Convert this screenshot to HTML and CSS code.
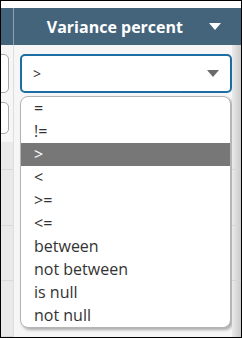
FILE: index.html
```html
<!DOCTYPE html>
<html lang="en">
<head>
    <meta charset="UTF-8">
    <title>Variance filter</title>
    <link rel="stylesheet" href="styles.css">
</head>
<body>
    <div class="frame">
        <div class="top-gap"></div>
        <div class="header">
            <div class="header-stub"></div>
            <div class="header-cell">
                <span class="header-title">Variance percent</span>
                <span class="caret caret-white"></span>
            </div>
        </div>
        <div class="grid-body">
            <div class="side">
                <div class="stub-input"></div>
                <div class="stub-input stub-second"></div>
                <div class="rows"></div>
            </div>
            <div class="filter-col">
                <div class="select">
                    <span class="select-value">&gt;</span>
                    <span class="caret caret-gray"></span>
                </div>
                <ul class="options">
                    <li>=</li>
                    <li>!=</li>
                    <li class="active">&gt;</li>
                    <li>&lt;</li>
                    <li>&gt;=</li>
                    <li>&lt;=</li>
                    <li>between</li>
                    <li>not between</li>
                    <li>is null</li>
                    <li>not null</li>
                </ul>
            </div>
            <div class="gutter"></div>
        </div>
    </div>
</body>
</html>
```

FILE: styles.css
```css
body {
    margin: 0;
    font-family: "Open Sans", Arial, sans-serif;
}
.frame {
    width: 242px;
    height: 338px;
    border: 1px solid #000;
    box-sizing: border-box;
    display: flex;
    flex-direction: column;
    background-color: #f6f6f6;
    overflow: hidden;
}
.top-gap {
    height: 7px;
    background-color: #fff;
}
.header {
    display: flex;
    height: 37px;
    background-color: #44647c;
}
.header-stub {
    width: 12px;
    border-right: 1px solid #8ea2b2;
}
.header-cell {
    flex: 1;
    display: flex;
    align-items: center;
    justify-content: flex-end;
    padding-right: 20px;
}
.header-title {
    color: #fff;
    font-weight: bold;
    font-size: 16px;
    margin-right: 26px;
}
.caret {
    width: 0;
    height: 0;
    border-left: 6.5px solid transparent;
    border-right: 6.5px solid transparent;
}
.caret-white {
    border-top: 7px solid #fff;
}
.caret-gray {
    border-top: 7px solid #6a6a6a;
}
.grid-body {
    flex: 1;
    display: flex;
}
.side {
    width: 12px;
    border-right: 1px solid #dedede;
    display: flex;
    flex-direction: column;
    overflow: hidden;
}
.stub-input {
    width: 16px;
    height: 37px;
    margin: 9px 0 0 -10px;
    border: 1px solid #a8a8a8;
    border-radius: 5px;
    background-color: #fff;
    flex-shrink: 0;
}
.stub-second {
    height: 30px;
    margin-top: 9px;
}
.rows {
    flex: 1;
    margin-top: 8px;
    background: repeating-linear-gradient(to bottom, #e9e9e9 0, #e9e9e9 27px, #d9d9d9 27px, #d9d9d9 28px, #e9e9e9 28px, #e9e9e9 55.5px);
}
.filter-col {
    width: 212px;
    padding: 9px 0 0 6px;
}
.select {
    height: 35px;
    border: 2px solid #1b6ea3;
    border-radius: 5px;
    background-color: #fff;
    display: flex;
    align-items: center;
    justify-content: space-between;
    padding: 0 11px 0 11px;
    color: #333;
    font-size: 14px;
}
.options {
    list-style: none;
    margin: 3px 0 0 0;
    padding: 0;
    width: 209px;
    border: 1px solid #b4b4b4;
    border-radius: 8px;
    background-color: #fff;
    box-shadow: 2px 2px 3px rgba(0, 0, 0, 0.3);
    overflow: hidden;
}
.options li {
    height: 23px;
    line-height: 23px;
    padding-left: 13px;
    font-size: 16px;
    color: #333;
}
.options li.active {
    background-color: #777;
    color: #fff;
}
.gutter {
    flex: 1;
    background:
        linear-gradient(to bottom, transparent 0, transparent 124px, #d6d6d6 124px, #d6d6d6 125px, transparent 125px, transparent 180px, #d6d6d6 180px, #d6d6d6 181px, transparent 181px, transparent 235px, #d6d6d6 235px, #d6d6d6 236px, transparent 236px),
        linear-gradient(to right, #ebebeb, #c9c9c9);
}
```
